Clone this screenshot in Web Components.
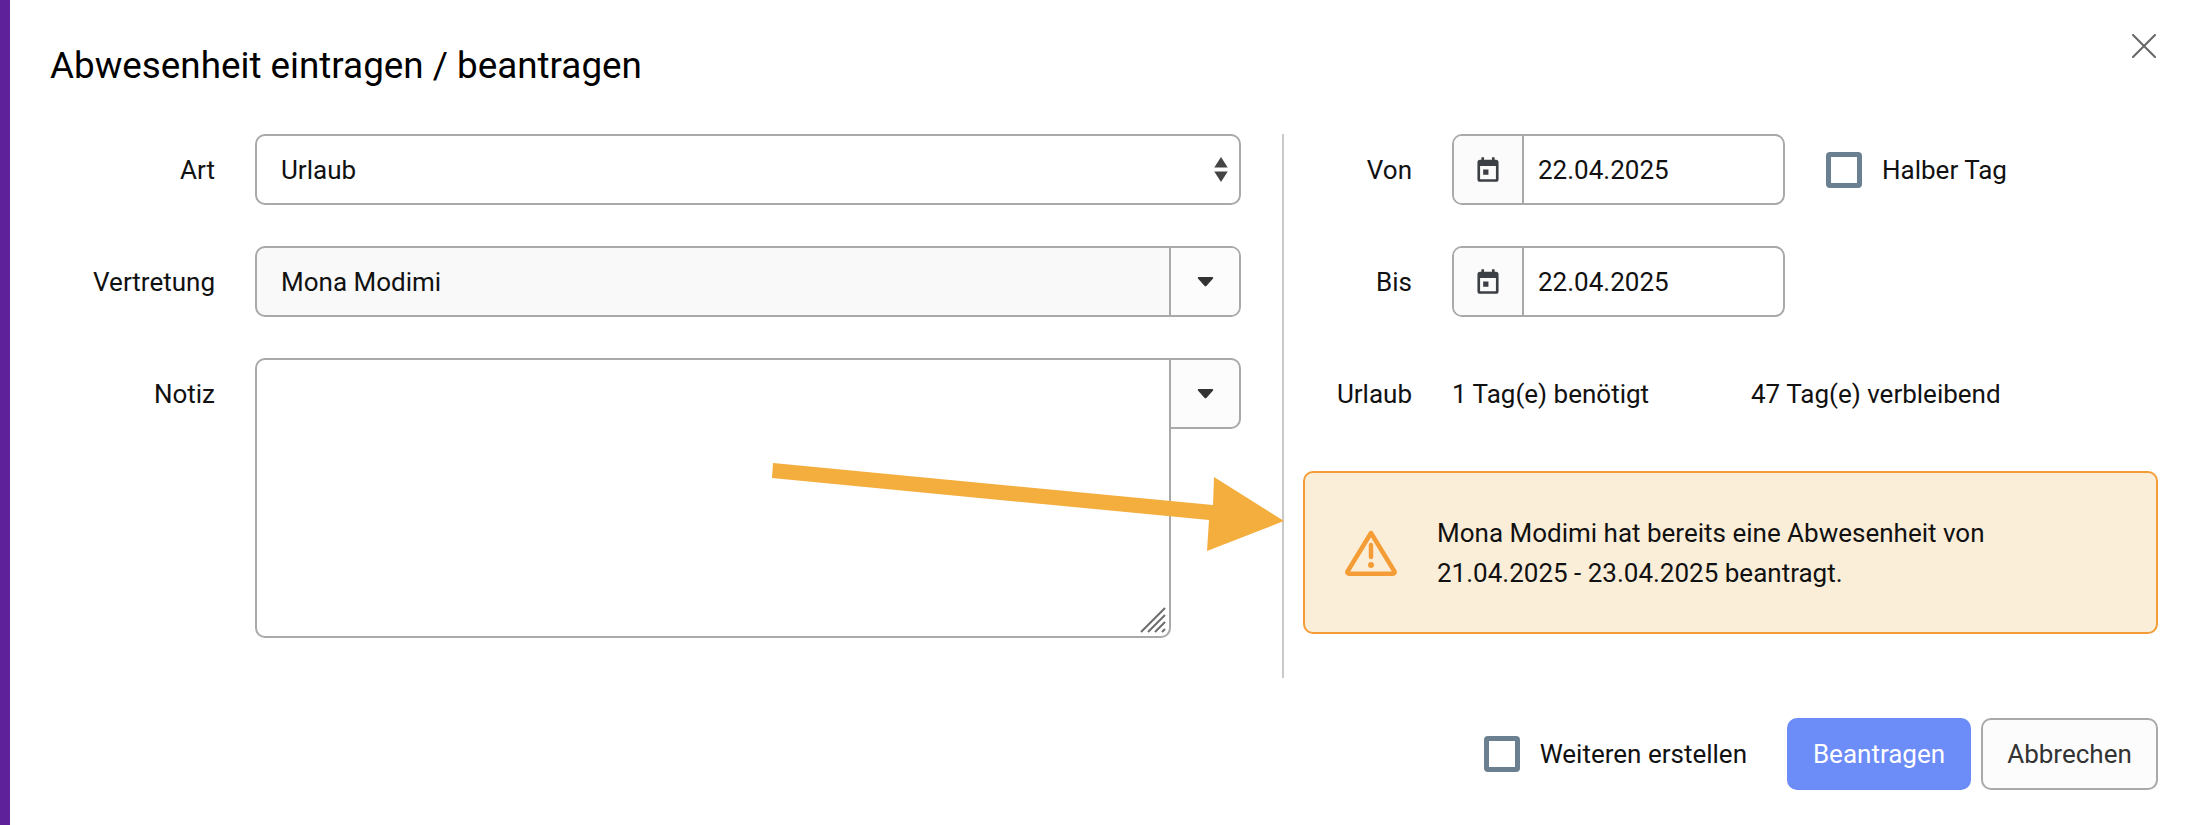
<!DOCTYPE html>
<html lang="de"><head><meta charset="utf-8"><title>Abwesenheit</title>
<style>
html,body{margin:0;padding:0;background:#fff;height:100%;overflow:hidden}
body{font:26px/1.2 Roboto,"Liberation Sans",sans-serif;color:#111}
</style></head><body>
<x-dialog heading="Abwesenheit eintragen / beantragen">
  <x-field slot="left" label="Art"><x-select value="Urlaub"></x-select></x-field>
  <x-field slot="left" label="Vertretung"><x-combo value="Mona Modimi"></x-combo></x-field>
  <x-field slot="left" label="Notiz"><x-note></x-note></x-field>
  <x-field slot="right" label="Von" compact><x-date value="22.04.2025"></x-date><x-check label="Halber Tag" style="margin-left:41px"></x-check></x-field>
  <x-field slot="right" label="Bis" compact><x-date value="22.04.2025"></x-date></x-field>
  <x-field slot="right" label="Urlaub" compact><x-stat>1 Tag(e) benötigt</x-stat><x-stat>47 Tag(e) verbleibend</x-stat></x-field>
  <x-alert slot="right">Mona Modimi hat bereits eine Abwesenheit von<br>21.04.2025 - 23.04.2025 beantragt.</x-alert>
  <x-check slot="footer" label="Weiteren erstellen" style="margin-right:30px"></x-check>
  <x-btn slot="footer" primary>Beantragen</x-btn>
  <x-btn slot="footer">Abbrechen</x-btn>
  <x-arrow slot="overlay"></x-arrow>
</x-dialog>
<script>
function def(name, css, html, init){
  customElements.define(name, class extends HTMLElement{
    connectedCallback(){
      if(this.shadowRoot) return;
      const r=this.attachShadow({mode:'open'});
      r.innerHTML='<style>'+css+'</style>'+(typeof html==='function'?html(this):html);
      if(init) init(this,r);
    }
  });
}
const BORDER='#a9a9a9';
const caret='<svg width="17" height="11" viewBox="0 0 18 12"><path d="M1.500 1.200h15a1 1 0 0 1 .75 1.650l-7.300 8a1.300 1.300 0 0 1-1.900 0l-7.300-8A1 1 0 0 1 1.500 1.200z" fill="#333"/></svg>';
const cal='<svg width="22" height="25" viewBox="0 0 25 28"><path fill-rule="evenodd" fill="#3c3f44" d="M5 0h3v3h9V0h3v3h1.500A3 3 0 0 1 24.500 6v19a3 3 0 0 1-3 3h-18a3 3 0 0 1-3-3V6a3 3 0 0 1 3-3H5zM3.500 10v15h18V10zM7 14h6v6H7z"/></svg>';

def('x-dialog',`
:host{display:flex;height:825px;box-sizing:border-box;background:#fff}
.bar{width:10px;background:#5f2199;flex:none}
.main{flex:1;position:relative;display:flex;flex-direction:column;padding:0 30px 0 40px;min-width:0}
header{display:flex;justify-content:space-between;align-items:flex-start;height:134px}
h1{margin:0;padding-top:45px;font:400 36.800px/42px Roboto,sans-serif;color:#000;white-space:nowrap}
.close{margin:34px 2px 0 0;width:24px;height:24px;display:block}
.body{display:flex;height:544px}
.left{width:1232px;flex:none;display:flex;flex-direction:column;gap:41px}
.div{width:2px;background:#c9c9c9;flex:none}
.right{flex:1;display:flex;flex-direction:column;gap:41px;min-width:0}
footer{display:flex;justify-content:flex-end;align-items:center;gap:10px;height:72px;margin-top:40px}
`,h=>`<div class="bar"></div><div class="main">
<header><h1>${h.getAttribute('heading')}</h1>
<svg class="close" viewBox="0 0 24 24"><path d="M1 1l22 22M23 1L1 23" stroke="#666" stroke-width="2" stroke-linecap="round" fill="none"/></svg></header>
<div class="body"><div class="left"><slot name="left"></slot></div><div class="div"></div><div class="right"><slot name="right"></slot></div></div>
<footer><slot name="footer"></slot></footer>
<slot name="overlay"></slot></div>`);

def('x-field',`
:host{display:grid;grid-template-columns:165px 986px;column-gap:40px;align-items:start}
:host([compact]){grid-template-columns:128px auto;column-gap:40px}
.l{height:71px;display:flex;align-items:center;justify-content:flex-end;color:#111;white-space:nowrap;padding-top:3px;box-sizing:border-box}
.c{display:flex;align-items:flex-start;min-width:0}
`,h=>`<div class="l">${h.getAttribute('label')}</div><div class="c"><slot></slot></div>`);

def('x-select',`
:host{display:flex;align-items:center;justify-content:space-between;width:986px;height:71px;box-sizing:border-box;border:2px solid ${BORDER};border-radius:10px;background:#fff;padding:0 10px 0 24px}
span{padding-top:2px}
`,h=>`<span>${h.getAttribute('value')}</span><svg width="16" height="25" viewBox="0 0 16 26"><path d="M8 0l7 11H1z" fill="#444"/><path d="M8 26L1 15h14z" fill="#444"/></svg>`);

def('x-combo',`
:host{display:flex;width:986px;height:71px;box-sizing:border-box;border:2px solid ${BORDER};border-radius:10px;overflow:hidden;background:#f9f9f9}
.v{flex:1;display:flex;align-items:center;padding:2px 0 0 24px}
.b{width:70px;flex:none;box-sizing:border-box;border-left:2px solid ${BORDER};background:#fcfcfc;display:flex;align-items:center;justify-content:center}
`,h=>`<div class="v">${h.getAttribute('value')}</div><div class="b">${caret}</div>`);

def('x-note',`
:host{display:flex;width:986px;align-items:flex-start}
.t{position:relative;flex:1;height:280px;box-sizing:border-box;border:2px solid ${BORDER};border-radius:10px 0 10px 10px;background:#fff}
textarea{display:block;width:100%;height:100%;box-sizing:border-box;border:0;background:transparent;resize:none;outline:0;padding:0;margin:0;font:inherit}
.g{position:absolute;right:3px;bottom:3px;display:block}
.b{width:70px;height:71px;flex:none;box-sizing:border-box;border:2px solid ${BORDER};border-left:0;border-radius:0 10px 10px 0;background:#fcfcfc;display:flex;align-items:center;justify-content:center}
`,`<div class="t"><textarea aria-label="Notiz"></textarea>
<svg class="g" width="26" height="26" viewBox="0 0 26 26"><path d="M1 25L25 1M8 25L25 8M15 25L25 15M22 25l3-3" stroke="#6d6d6d" stroke-width="2" fill="none"/></svg></div><div class="b">${caret}</div>`);

def('x-date',`
:host{display:flex;flex:none;width:333px;height:71px;box-sizing:border-box;border:2px solid ${BORDER};border-radius:10px;overflow:hidden;background:#fff}
.i{width:70px;flex:none;box-sizing:border-box;border-right:2px solid ${BORDER};background:#fbfbfb;display:flex;align-items:center;justify-content:center;padding-right:1px}
.v{flex:1;display:flex;align-items:center;padding:2px 0 0 14px}
`,h=>`<div class="i">${cal}</div><div class="v">${h.getAttribute('value')}</div>`);

def('x-check',`
:host{display:inline-flex;align-items:center;height:71px;flex:none;gap:20px;white-space:nowrap;color:#111}
.b{width:36px;height:36px;box-sizing:border-box;border:5px solid #6a8090;border-radius:4px;background:#fff;flex:none}
.t{padding-top:2px}
`,h=>`<span class="b"></span><span class="t">${h.getAttribute('label')}</span>`);

def('x-stat',`
:host{display:flex;align-items:center;height:71px;width:299px;flex:none;white-space:nowrap;color:#111;padding-top:3px;box-sizing:border-box}
`,`<slot></slot>`);

def('x-alert',`
:host{display:flex;align-items:center;height:163px;box-sizing:border-box;margin:1px 0 0 19px;width:855px;border:2px solid #f49d37;border-radius:10px;background:#fbeed9;padding:0 0 0 40px;color:#111}
svg{flex:none;display:block;margin-right:40px}
div{line-height:40px;padding-top:1px}
`,`<svg width="52" height="46" viewBox="0 0 52 46"><path d="M26 3L49.500 41.500a1.500 1.500 0 0 1-1.300 2.200H3.800a1.500 1.500 0 0 1-1.300-2.200z" fill="none" stroke="#f49d37" stroke-width="4.500" stroke-linejoin="round"/><path d="M26 15v12" stroke="#f49d37" stroke-width="4.500" stroke-linecap="round"/><circle cx="26" cy="35" r="3" fill="#f49d37"/></svg><div><slot></slot></div>`);

def('x-btn',`
:host{display:inline-flex;align-items:center;justify-content:center;height:72px;width:177px;box-sizing:border-box;border:2px solid ${BORDER};border-radius:10px;background:#fcfcfc;color:#333;flex:none;padding-top:2px}
:host([primary]){width:184px;background:#6c8cf8;border-color:#6c8cf8;color:#fff}
`,`<slot></slot>`);

def('x-arrow',`
:host{position:absolute;left:-10px;top:0;width:0;height:0;display:block;pointer-events:none}
svg{position:absolute;left:0;top:0;overflow:visible;display:block}
`,`<svg width="2178" height="825" viewBox="0 0 2178 825"><path d="M773 463L1213 505L1214 477L1284 521L1207 551L1209 520L772 478z" fill="#f4ae3d"/></svg>`);
</script>
</body></html>
